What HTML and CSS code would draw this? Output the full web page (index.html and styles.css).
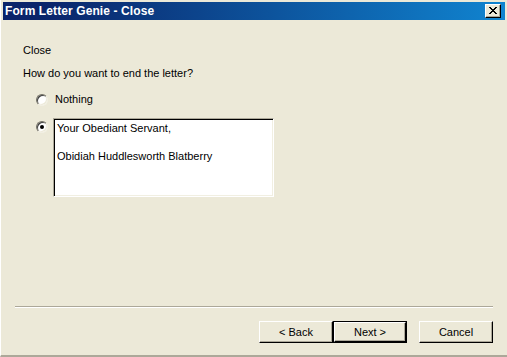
FILE: index.html
```html
<!DOCTYPE html>
<html>
<head>
<meta charset="utf-8">
<link rel="stylesheet" href="styles.css">
</head>
<body>
<div class="window">
  <div class="titlebar">
    <span class="title">Form Letter Genie - Close</span>
    <span class="close-btn">
      <svg width="8" height="7" viewBox="0 0 8 7"><path d="M0 0h2v1h1v1h2V1h1V0h2v1H7v1H6v1H5v1h1v1h1v1h1v1H6V6H5V5H3v1H2v1H0V6h1V5h1V4h1V3H2V2H1V1H0z" fill="#000"/></svg>
    </span>
  </div>
  <div class="content">
    <div class="heading">Close</div>
    <div class="question">How do you want to end the letter?</div>
    <div class="option">
      <span class="radio"></span>
      <span class="label">Nothing</span>
    </div>
    <div class="option option-text">
      <span class="radio checked"><span class="dot"></span></span>
      <div class="textbox">
        <div class="line">Your Obediant Servant,</div>
        <div class="line">&nbsp;</div>
        <div class="line">Obidiah Huddlesworth Blatberry</div>
      </div>
    </div>
  </div>
  <div class="separator"></div>
  <div class="buttons">
    <span class="btn">&lt; Back</span>
    <span class="btn default"><span class="inner">Next &gt;</span></span>
    <span class="btn cancel">Cancel</span>
  </div>
</div>
</body>
</html>
```

FILE: styles.css
```css
html, body {
  margin: 0;
  padding: 0;
  background: #ece9d8;
}
body {
  font-family: "Liberation Sans", Arial, sans-serif;
  font-size: 11px;
  color: #000;
}
.window {
  width: 507px;
  height: 357px;
  box-sizing: border-box;
  padding: 2px 2px 0 2px;
  border-left: 1px solid #ffffff;
  border-bottom: 2px solid #aca899;
  display: flex;
  flex-direction: column;
  position: relative;
}
.titlebar {
  height: 18px;
  background: linear-gradient(to right, #0a246a 0%, #0a246a 8%, #1084d0 100%);
  display: flex;
  align-items: center;
  justify-content: space-between;
  padding: 0 4px 0 2px;
}
.title {
  color: #fff;
  font-weight: bold;
  font-size: 12px;
  letter-spacing: 0.1px;
}
.close-btn {
  width: 16px;
  height: 14px;
  box-sizing: border-box;
  background: #ece9d8;
  border-top: 1px solid #fff;
  border-left: 1px solid #fff;
  border-right: 1px solid #000;
  border-bottom: 1px solid #000;
  box-shadow: inset -1px -1px 0 #aca899;
  display: flex;
  align-items: center;
  justify-content: center;
}
.close-btn svg { display: block; margin-top: -1px; }
.content {
  padding-left: 20px;
}
.heading {
  line-height: 13px;
  margin-top: 24px;
}
.question {
  line-height: 13px;
  margin-top: 10px;
}
.option {
  display: flex;
  align-items: center;
  margin-left: 13px;
  margin-top: 13px;
  line-height: 13px;
}
.label { margin-left: 7px; }
.radio {
  width: 12px;
  height: 12px;
  box-sizing: border-box;
  border-radius: 50%;
  background: #fff;
  border: 1px solid;
  border-color: #716f64 #f1efe2 #f1efe2 #716f64;
  box-shadow: inset 1px 1px 0 #404040, inset -1px -1px 0 #ece9d8;
  display: flex;
  align-items: center;
  justify-content: center;
  flex: none;
}
.dot {
  width: 4px;
  height: 4px;
  border-radius: 50%;
  background: #000;
}
.option-text {
  align-items: flex-start;
  margin-top: 12px;
}
.option-text .radio { margin-top: 3px; }
.textbox {
  margin-left: 5px;
  width: 221px;
  height: 79px;
  box-sizing: border-box;
  background: #fff;
  border: 1px solid;
  border-color: #aca899 #fff #fff #aca899;
  box-shadow: inset 1px 1px 0 #000, inset -1px -1px 0 #f1efe2;
  padding: 2px 3px;
}
.line {
  line-height: 14px;
}
.separator {
  margin: auto 12px 0 12px;
  border-top: 1px solid #aca899;
  border-bottom: 1px solid #fff;
  height: 0;
}
.buttons {
  display: flex;
  justify-content: flex-end;
  padding: 13px 12px 12px 0;
}
.btn {
  width: 74px;
  height: 22px;
  box-sizing: border-box;
  border-top: 1px solid #fff;
  border-left: 1px solid #fff;
  border-right: 1px solid #000;
  border-bottom: 1px solid #000;
  box-shadow: inset -1px -1px 0 #aca899;
  display: flex;
  align-items: center;
  justify-content: center;
  line-height: 13px;
}
.btn.default {
  border: 1px solid #000;
  box-shadow: none;
  padding: 0;
}
.btn.default .inner {
  width: 100%;
  height: 100%;
  box-sizing: border-box;
  border-top: 1px solid #fff;
  border-left: 1px solid #fff;
  border-right: 1px solid #000;
  border-bottom: 1px solid #000;
  box-shadow: inset -1px -1px 0 #aca899;
  display: flex;
  align-items: center;
  justify-content: center;
}
.btn.cancel { margin-left: 12px; }
```
